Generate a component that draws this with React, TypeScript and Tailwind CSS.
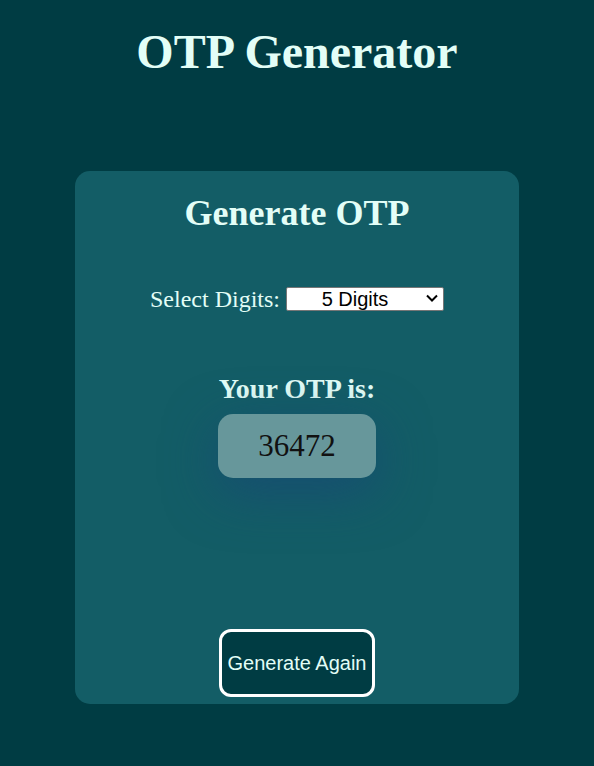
import React, { useState } from "react";

export default function App() {
  const [digits, setDigits] = useState("5");
  return (
    <div className="min-h-[766px] w-full bg-[#003c43] flex flex-col items-center pt-[24px] font-['Liberation_Serif',serif]">
      <h1 className="text-[48px] leading-[56px] font-bold text-[#e3fef7]">OTP Generator</h1>
      <div className="mt-[91px] w-[444px] h-[533px] rounded-[15px] bg-[#135d66] flex flex-col items-center pt-[21px]">
        <h2 className="text-[36px] leading-[42px] font-bold text-[#e3fef7]">Generate OTP</h2>
        <div className="mt-[53px] h-[24px] flex items-center gap-[6px] text-[#e3fef7]">
          <label className="text-[24px] leading-[24px]">Select Digits:</label>
          <div className="relative w-[158px] h-[24px]">
            <select
              value={digits}
              onChange={(e) => setDigits(e.target.value)}
              className="appearance-none w-[158px] h-[24px] bg-white text-black border border-[#767676] rounded-[2px] text-[20px] leading-[22px] font-['Liberation_Sans',sans-serif] [text-align-last:center] text-center pl-[2px] pr-[22px]"
            >
              <option value="4">4 Digits</option>
              <option value="5">5 Digits</option>
              <option value="6">6 Digits</option>
            </select>
            <svg
              className="absolute right-[6px] top-[7px] pointer-events-none"
              width="12"
              height="9"
              viewBox="0 0 12 9"
              fill="none"
            >
              <path d="M1 1.5 L6 6.5 L11 1.5" stroke="#000" strokeWidth="2" />
            </svg>
          </div>
        </div>
        <h3 className="mt-[62px] text-[28px] leading-[32px] font-bold text-[#e3fef7]">Your OTP is:</h3>
        <div className="mt-[9px] w-[158px] h-[64px] rounded-[15px] bg-[#67979b] flex items-center justify-center shadow-[0_14px_52px_rgba(24,72,118,0.75)]">
          <span className="text-[31px] leading-[34px] text-[#111]">36472</span>
        </div>
        <button className="mt-[151px] w-[156px] h-[68px] rounded-[12px] border-[3px] border-white bg-[#003c43] text-[#e3fef7] text-[20px] font-['Liberation_Sans',sans-serif] flex items-center justify-center">
          Generate Again
        </button>
      </div>
    </div>
  );
}
